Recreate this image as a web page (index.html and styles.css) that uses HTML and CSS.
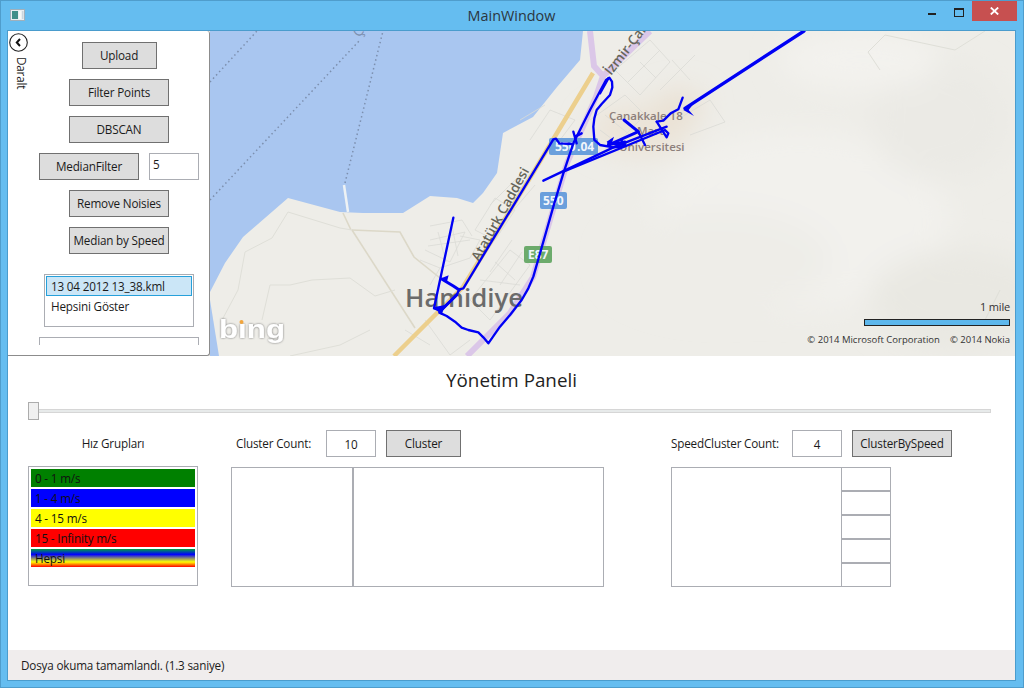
FILE: index.html
```html
<!DOCTYPE html>
<html lang="tr">
<head>
<meta charset="utf-8">
<title>MainWindow</title>
<link rel="stylesheet" href="styles.css">
</head>
<body>
<div class="window">
  <header class="titlebar">
    <div class="title-left">
      <svg class="app-icon" viewBox="0 0 15 12" width="15" height="12"><rect x=".5" y=".5" width="14" height="11" fill="#e8eef2" stroke="#9fb0bc"/><rect x="2" y="2" width="6" height="8" fill="#3f8f8a"/><rect x="9" y="2" width="2" height="8" fill="#f4f8f6"/><rect x="12" y="2" width="1.500" height="8" fill="#c9d6dd"/></svg>
    </div>
    <div class="title-text">MainWindow</div>
    <div class="title-buttons">
      <span class="btn-min"></span>
      <span class="btn-max"></span>
      <span class="btn-close"><svg viewBox="0 0 9 8" width="9" height="8"><path d="M.8.5 8.200 7.500M8.200.5.800 7.500" stroke="#fff" stroke-width="1.800" fill="none"/></svg></span>
    </div>
  </header>

  <main class="client">
    <section class="map">
      <svg class="map-canvas" viewBox="8 31 1008 325" width="1008" height="325">
        <defs>
          <filter id="soft" x="-30%" y="-30%" width="160%" height="160%"><feGaussianBlur stdDeviation="14"/></filter>
          <filter id="logo" x="-20%" y="-20%" width="140%" height="140%"><feDropShadow dx="0" dy="0" stdDeviation="1.300" flood-color="#6f6f6f"/></filter>
        </defs>
        <rect x="8" y="31" width="1008" height="325" fill="#eeede8"/>
        <path d="M210 31H583L580 60 557 87 533 117 503 133 497 173 483 193 473 203 457 198 430 196 403 213 363 213 340 212 288 198 243 237 225 263 210 292Z" fill="#a9c6f0"/>
        <path d="M210 300 219 356H210Z" fill="#a9c6f0"/>

        <g filter="url(#soft)">
          <ellipse cx="640" cy="130" rx="52" ry="24" fill="#ebe3d7"/>
          <ellipse cx="680" cy="105" rx="24" ry="14" fill="#e9dfd0"/>
          <ellipse cx="800" cy="220" rx="150" ry="90" fill="#f2f1ed"/>
          <ellipse cx="940" cy="120" rx="70" ry="60" fill="#ebeae5"/>
          <ellipse cx="720" cy="260" rx="110" ry="50" fill="#eeede8"/>
          <ellipse cx="960" cy="300" rx="90" ry="50" fill="#e9e8e2"/>
          <ellipse cx="860" cy="60" rx="80" ry="30" fill="#f3f2ee"/>
        </g>

        <g class="ferry">
          <path d="M210 82 257 31"/>
          <path d="M210 200 360 40"/>
          <path d="M345 183 383 31"/>
        </g>
        <path d="M344 185 348 212" stroke="#eef2f4" stroke-width="2.500" fill="none"/>

        <g class="paths-tan">
          <path d="M352 230 400 232 414 257 440 278"/>
          <path d="M352 230 415 328"/>
          <path d="M343 213 351 230"/>
        </g>
        <g class="paths-thin">
          <path d="M288 212 340 228 352 230"/>
          <path d="M288 212 272 238 245 252 238 290 222 320"/>
          <path d="M262 320 270 285 290 285 312 280 350 278 375 296 395 290"/>
          <path d="M290 356 340 345 370 330"/>
          <path d="M985 31 955 50 885 35 868 52 880 70"/>
          <path d="M1000 290 985 320"/>
        </g>
        <g class="streets">
          <path d="M430 240 465 232 450 262 425 250M440 268 470 258 480 240 460 236M475 230 495 198 515 210 495 240 475 230M490 205 520 175M505 220 535 185M470 300 510 250 530 265 490 320 470 300M480 280 520 285M495 262 515 280"/>
          <path d="M430 226 462 220 472 236M438 232 446 262M452 226 458 256M428 246 470 240M480 262 500 232M490 272 512 240M500 285 522 252"/>
          <path d="M615 70 650 40 670 62 640 95 615 70M628 82 660 50M640 62 656 78M660 90 695 55M672 60 690 80"/>
          <path d="M590 120 625 95 645 115 610 150M600 130 620 145M605 115 630 135M680 118 710 100 725 122 690 135"/>
          <path d="M420 260 440 268 430 285M405 330 430 345M425 320 450 355 470 340"/>
          <path d="M530 140 550 110 575 120 560 140M520 120 545 105"/>
        </g>

        <path class="road-purple" d="M590 31 594 66 603 76 596 97 567 163 547 230 533 277 510 313 467 356"/>
        <path class="road-purple" d="M603 76 650 31"/>
        <path class="road-yellow" d="M394 356 433 317 463 287 533 173 593 73"/>

        <text class="label-road" transform="translate(479 262) rotate(-61)">Atatürk Caddesi</text>
        <text class="label-road" transform="translate(611 76) rotate(-52)">İzmir-Çanakkale</text>
        <text class="label-ferry" transform="translate(359 38) rotate(-50)">Ç</text>
        <text class="label-town" x="405" y="307">Hamidiye</text>
        <text class="label-uni" x="609" y="120">Çanakkale 18</text>
        <text class="label-uni" x="637" y="135">Mart</text>
        <text class="label-uni" x="619" y="151">Üniversitesi</text>

        <g>
          <rect class="shield-blue" x="549" y="138" width="28" height="17" rx="2"/>
          <rect class="shield-blue" x="571" y="138" width="27" height="17" rx="2"/>
          <text class="shield-text" x="555" y="151">550</text>
          <text class="shield-text" x="577" y="151">.04</text>
          <rect class="shield-blue" x="540" y="192" width="27" height="17" rx="2"/>
          <text class="shield-text" x="543" y="205">550</text>
          <rect class="shield-green" x="524" y="246" width="28" height="17" rx="2"/>
          <text class="shield-text" x="528" y="259">E87</text>
        </g>

        <g class="track" transform="translate(400 30) scale(.33333)">
          <path d="M160 563 102 835 122 842 170 795 178 778 190 775 460 328 468 326 478 340 520 342"/>
          <path class="bold" d="M178 780 160 768 125 747"/>
          <path class="bold" d="M122 842 170 795"/>
          <path d="M118 848 140 858 165 875 185 893 205 900 235 907 250 922 265 940 300 890 330 855 365 810 385 775 400 740 420 670 440 600 460 530 490 430 520 340 570 240 618 150 628 143 636 155 637 172 630 195 605 222 590 240 583 265 580 290 583 330 600 345 640 352 670 350 675 335 625 345"/>
          <path d="M600 190 625 145"/>
          <path d="M520 305 530 340M525 320 545 310"/>
          <path class="bold" d="M625 345 715 305 672 270"/>
          <path d="M715 305 735 345"/>
          <path d="M430 452 645 350 800 290"/>
          <path d="M490 425 795 300 805 310 800 322 770 275"/>
          <path d="M848 203 835 238 812 250 790 272 770 275"/>
          <path class="thick" d="M1212 3 855 235"/>
          <path d="M625 340 675 345 665 332"/>
          <polygon class="head" points="100,832 135,825 125,855"/>
          <polygon class="head" points="120,746 146,736 140,758"/>
          <polygon class="head" points="850,240 880,222 866,240 882,258"/>
          <polygon class="head" points="620,335 642,320 632,350"/>
        </g>

        <g class="bing-logo">
          <text x="219" y="338" textLength="66" lengthAdjust="spacingAndGlyphs">bıng</text>
          <circle cx="241.500" cy="322" r="2" fill="#f2a53c"/>
        </g>
      </svg>

      <div class="scale">
        <div class="scale-label">1 mile</div>
        <div class="scale-bar"></div>
        <div class="copyright"><span>© 2014 Microsoft Corporation</span><span>© 2014 Nokia</span></div>
      </div>

      <aside class="panel">
        <div class="panel-side">
          <svg class="collapse" viewBox="0 0 19 19" width="19" height="19"><circle cx="9.500" cy="9.500" r="8.800" fill="#fff" stroke="#222" stroke-width="1.100"/><path d="M11 6 7.800 9.500 11 13" fill="none" stroke="#111" stroke-width="2"/></svg>
          <span class="collapse-label">Daralt</span>
        </div>
        <div class="panel-main">
          <button class="btn btn-upload">Upload</button>
          <button class="btn btn-wide">Filter Points</button>
          <button class="btn btn-wide">DBSCAN</button>
          <div class="median-row">
            <button class="btn btn-wide">MedianFilter</button>
            <div class="input input-left">5</div>
          </div>
          <button class="btn btn-wide">Remove Noisies</button>
          <button class="btn btn-wide">Median by Speed</button>
          <div class="listbox">
            <div class="list-item selected">13 04 2012 13_38.kml</div>
            <div class="list-item">Hepsini Göster</div>
          </div>
          <div class="cut-box"></div>
        </div>
      </aside>
    </section>

    <section class="controls">
      <h1 class="panel-title">Yönetim Paneli</h1>
      <div class="slider"><div class="thumb"></div><div class="track-bar"></div></div>
      <div class="columns">
        <div class="col col-speed">
          <div class="col-head center">Hız Grupları</div>
          <div class="legend">
            <div class="legend-item green">0 - 1 m/s</div>
            <div class="legend-item blue">1 - 4 m/s</div>
            <div class="legend-item yellow">4 - 15 m/s</div>
            <div class="legend-item red">15 - Infinity m/s</div>
            <div class="legend-item rainbow">Hepsi</div>
          </div>
        </div>
        <div class="col col-cluster">
          <div class="col-head">
            <span class="count-label label-cluster">Cluster Count:</span>
            <div class="input">10</div>
            <button class="btn btn-upload">Cluster</button>
          </div>
          <div class="split split-cluster"><div class="cell cell-a"></div><div class="cell cell-b"></div></div>
        </div>
        <div class="col col-speedcluster">
          <div class="col-head">
            <span class="count-label label-speed">SpeedCluster Count:</span>
            <div class="input">4</div>
            <button class="btn btn-wide">ClusterBySpeed</button>
          </div>
          <div class="split split-speed">
            <div class="cell cell-c"></div>
            <div class="stack">
              <div class="cell"></div><div class="cell"></div><div class="cell"></div><div class="cell"></div><div class="cell"></div>
            </div>
          </div>
        </div>
      </div>
    </section>

    <footer class="status">Dosya okuma tamamlandı. (1.3 saniye)</footer>
  </main>
</div>
</body>
</html>
```
FILE: styles.css
```css
* { box-sizing: border-box; }
html, body { margin: 0; padding: 0; }
body {
  width: 1024px;
  height: 688px;
  overflow: hidden;
  font-family: "Open Sans", "Noto Sans", sans-serif;
  font-size: 11.700px;
  letter-spacing: -.18px;
  color: #1b1b1b;
}
.window {
  width: 1024px;
  height: 688px;
  display: flex;
  flex-direction: column;
  background: #65bdf0;
  border: 1px solid #4f9dcc;
  padding: 0 7px 6px 6px;
}
.titlebar {
  height: 29px;
  flex: none;
  display: grid;
  grid-template-columns: 1fr auto 1fr;
}
.title-left { padding: 8px 0 0 3px; }
.app-icon { display: block; }
.title-text { font-size: 14.400px; letter-spacing: 0; line-height: 30px; color: #2b3640; }
.title-buttons { display: flex; justify-content: flex-end; align-items: flex-start; }
.btn-min { width: 8px; height: 2px; margin: 12px 18px 0 0; background: #222; }
.btn-max { width: 10px; height: 9px; margin: 7px 8px 0 0; border: 1px solid #222; border-top-width: 2px; }
.btn-close {
  width: 45px; height: 20px; background: #c75050;
  display: flex; align-items: center; justify-content: center;
  margin-right: -1px;
}
.client {
  flex: 1;
  display: flex;
  flex-direction: column;
  background: #fff;
  border: 1px solid #4a9ccd;
  min-height: 0;
}
.map { position: relative; height: 325px; flex: none; overflow: hidden; }
.map-canvas { display: block; }

.ferry path { stroke: #7c8fae; stroke-width: 1.500; stroke-dasharray: 1.500 3; fill: none; }
.paths-tan path { stroke: #dcd8c8; stroke-width: 1.600; fill: none; }
.paths-thin path { stroke: #dfdfd8; stroke-width: 1; fill: none; }
.streets path { stroke: #dadad6; stroke-width: .8; fill: none; }
.road-purple { stroke: #dbc7e8; stroke-width: 6; fill: none; }
.road-yellow { stroke: #eccf8d; stroke-width: 4.500; fill: none; }
.label-road { font-size: 13.500px; letter-spacing: 0; fill: #66665a; font-weight: 600; }
.label-ferry { font-size: 14px; fill: #7c8fae; }
.label-town { font-size: 25.800px; letter-spacing: 0; fill: #6b6b6b; font-weight: 600; }
.label-uni { font-size: 11.500px; letter-spacing: 0; fill: #8d7f7b; font-weight: 600; }
.shield-blue { fill: #6a9fdc; }
.shield-green { fill: #6cab6c; }
.shield-text { font-size: 12px; letter-spacing: 0; font-weight: 700; fill: #f2f6fb; }
.track path { fill: none; stroke: #0000f5; stroke-width: 7; stroke-linejoin: round; stroke-linecap: round; }
.track path.bold { stroke-width: 9; }
.track path.thick { stroke-width: 10; }
.head { fill: #0000f5; }
.bing-logo text { font-family: "Liberation Sans", sans-serif; font-size: 25px; letter-spacing: 0; font-weight: 700; fill: #fff; filter: url(#logo); }

.scale {
  position: absolute;
  right: 5px;
  top: 268px;
  display: flex;
  flex-direction: column;
  align-items: flex-end;
}
.scale-label { font-size: 11px; line-height: 16px; color: #333; }
.scale-bar { width: 146px; height: 7px; margin-top: 4px; background: #5db7ec; border: 1px solid #222; }
.copyright { font-size: 9.500px; line-height: 14px; color: #333; display: flex; gap: 10px; margin-top: 7px; letter-spacing: 0; }

.panel {
  position: absolute;
  left: 0; top: 0;
  width: 202px;
  height: 325px;
  background: #fff;
  border-right: 1px solid #8c8c8c;
  border-bottom: 1px solid #8c8c8c;
  border-radius: 0 3px 3px 0;
  display: flex;
}
.panel-side { width: 21px; flex: none; padding: 2px 0 0 1px; display: flex; flex-direction: column; }
.collapse { display: block; }
.collapse-label { writing-mode: vertical-rl; margin: 5px 0 0 -4px; line-height: 14px; }
.panel-main {
  width: 180px;
  padding-top: 11px;
  display: flex;
  flex-direction: column;
  align-items: center;
}
.btn {
  display: block;
  height: 27px;
  margin: 0 0 10px;
  padding: 0 0 2px;
  background: #ddd;
  border: 1px solid #707070;
  border-radius: 0;
  font: inherit;
  letter-spacing: inherit;
  color: #1b1b1b;
}
.btn-upload { width: 75px; }
.btn-wide { width: 100px; }
.median-row { width: 160px; display: flex; gap: 10px; }
.input {
  width: 50px;
  height: 27px;
  border: 1px solid #abadb3;
  background: #fff;
  text-align: center;
  line-height: 26px;
  flex: none;
}
.input-left { text-align: left; padding-left: 3px; line-height: 20px; }
.listbox {
  width: 150px;
  height: 53px;
  margin-top: 10px;
  border: 1px solid #abadb3;
  padding: 1px;
}
.list-item { height: 20px; line-height: 21px; padding-left: 5px; }
.list-item.selected { background: #cbe6f7; border: 1px solid #26a0da; padding-left: 4px; line-height: 19px; }
.cut-box { width: 160px; height: 8px; margin-top: 10px; border: 1px solid #abadb3; border-bottom: 0; }

.controls { flex: 1; min-height: 0; }
.panel-title { margin: 12px 0 0; font-size: 18.800px; letter-spacing: 0; line-height: 24px; font-weight: 400; text-align: center; color: #222; }
.slider { position: relative; height: 18px; margin: 10px 24px 0 20px; display: flex; align-items: center; }
.thumb { position: absolute; left: 0; top: 0; width: 11px; height: 18px; background: #f0f0f0; border: 1px solid #acacac; }
.track-bar { width: 100%; height: 4px; background: #e7eaea; border: 1px solid #d6d6d6; }
.columns { display: flex; margin-top: 10px; padding-left: 20px; }
.col-head { height: 27px; display: flex; align-items: center; }
.col-head.center { justify-content: center; padding-bottom: 1px; }
.col-head .btn { margin: 0; }
.col-speed { width: 170px; }
.col-cluster { width: 373px; margin-left: 33px; }
.col-speedcluster { width: 281px; margin-left: 67px; }
.count-label { display: block; padding-bottom: 1px; }
.label-cluster { width: 95px; padding-left: 5px; }
.label-speed { width: 121px; }
.col-cluster .input, .col-speedcluster .input { margin-right: 10px; }
.legend {
  width: 170px;
  height: 120px;
  margin-top: 9px;
  border: 1px solid #abadb3;
  padding: 2px;
  display: flex;
  flex-direction: column;
  gap: 2px;
}
.legend-item { height: 18px; line-height: 18px; padding-left: 4px; color: #111; }
.green { background: #008000; }
.blue { background: #0000ff; }
.yellow { background: #ffff00; }
.red { background: #ff0000; }
.rainbow { background: linear-gradient(to bottom, #00a040 0, #0000ff 30%, #80807f 50%, #ffff00 72%, #ff0000 100%); }
.split { display: flex; height: 120px; margin-top: 10px; }
.split-speed { width: 220px; }
.cell { border: 1px solid #abadb3; }
.cell-a { width: 122px; }
.cell-b { width: 251px; }
.cell-c { width: 171px; }
.stack { width: 50px; margin-left: -1px; display: flex; flex-direction: column; }
.stack .cell { height: 24px; }

.status {
  height: 30px;
  flex: none;
  background: #f0eded;
  padding-left: 13px;
  line-height: 30px;
}
```
